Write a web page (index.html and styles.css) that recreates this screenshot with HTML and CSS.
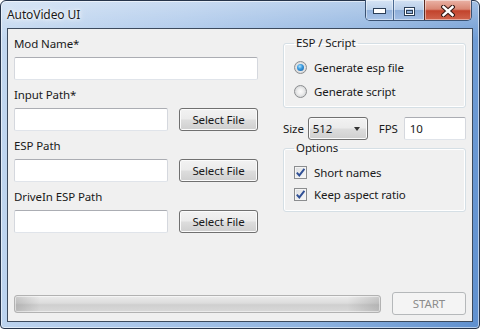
FILE: index.html
```html
<!DOCTYPE html>
<html lang="en">
<head>
    <meta charset="UTF-8">
    <title>AutoVideo UI</title>
    <link rel="stylesheet" href="styles.css">
</head>
<body>
    <div class="window">
        <div class="titlebar">
            <span class="title">AutoVideo UI</span>
            <div class="caption-buttons">
                <span class="cap-btn cap-min">
                    <svg width="13" height="6" viewBox="0 0 13 6"><rect x="0.5" y="0.5" width="12" height="5" fill="#fff" stroke="#2b3e57"/></svg>
                </span>
                <span class="cap-btn cap-max">
                    <svg width="11" height="9" viewBox="0 0 11 9"><rect x="0.5" y="0.5" width="10" height="8" fill="none" stroke="#2b3e57"/><rect x="1.5" y="1.5" width="8" height="6" fill="none" stroke="#fff"/><rect x="2.5" y="3.5" width="6" height="3" fill="none" stroke="#2b3e57"/></svg>
                </span>
                <span class="cap-btn cap-close">
                    <svg width="14" height="12" viewBox="0 0 14 12"><path d="M2.5 2 L11.5 10 M11.5 2 L2.5 10" stroke="#3a1c17" stroke-width="4.6" stroke-linecap="square"/><path d="M2.5 2 L11.5 10 M11.5 2 L2.5 10" stroke="#fff" stroke-width="2.4" stroke-linecap="square"/></svg>
                </span>
            </div>
        </div>

        <div class="client">
            <div class="main">
                <div class="left">
                    <div class="field">
                        <label>Mod Name*</label>
                        <div class="field-row"><div class="textbox full"></div></div>
                    </div>
                    <div class="field">
                        <label>Input Path*</label>
                        <div class="field-row"><div class="textbox"></div><button class="btn">Select File</button></div>
                    </div>
                    <div class="field">
                        <label>ESP Path</label>
                        <div class="field-row"><div class="textbox"></div><button class="btn">Select File</button></div>
                    </div>
                    <div class="field">
                        <label>DriveIn ESP Path</label>
                        <div class="field-row"><div class="textbox"></div><button class="btn">Select File</button></div>
                    </div>
                </div>

                <div class="right">
                    <fieldset class="group group-esp">
                        <legend>ESP / Script</legend>
                        <div class="option-row"><span class="radio checked"></span><span>Generate esp file</span></div>
                        <div class="option-row"><span class="radio"></span><span>Generate script</span></div>
                    </fieldset>

                    <div class="size-row">
                        <span>Size</span>
                        <div class="combo"><span>512</span><span class="arrow"></span></div>
                        <span class="fps-label">FPS</span>
                        <div class="textbox fps">10</div>
                    </div>

                    <fieldset class="group group-options">
                        <legend>Options</legend>
                        <div class="check-row">
                            <span class="checkbox"><svg width="11" height="11" viewBox="0 0 11 11"><path d="M1.8 5.6 L4.3 8.4 L9.4 1.8" fill="none" stroke="#2f4f95" stroke-width="1.9"/></svg></span>
                            <span>Short names</span>
                        </div>
                        <div class="check-row">
                            <span class="checkbox"><svg width="11" height="11" viewBox="0 0 11 11"><path d="M1.8 5.6 L4.3 8.4 L9.4 1.8" fill="none" stroke="#2f4f95" stroke-width="1.9"/></svg></span>
                            <span>Keep aspect ratio</span>
                        </div>
                    </fieldset>
                </div>
            </div>

            <div class="bottom">
                <div class="progress"></div>
                <button class="btn start" disabled>START</button>
            </div>
        </div>
    </div>
</body>
</html>
```

FILE: styles.css
```css
* {
    box-sizing: border-box;
}
html, body {
    margin: 0;
    padding: 0;
}
body {
    width: 480px;
    height: 329px;
    overflow: hidden;
    font-family: "Noto Sans", "Open Sans", sans-serif;
    font-size: 11.5px;
    letter-spacing: -0.1px;
    color: #1a1a1a;
    background: #fff;
}
.window {
    width: 480px;
    height: 329px;
    border: 1px solid #26344a;
    border-radius: 6px 6px 4px 4px;
    padding: 0 6px 6px;
    display: flex;
    flex-direction: column;
    background:
        linear-gradient(180deg, rgba(255, 255, 255, 0.35), rgba(255, 255, 255, 0) 40px),
        linear-gradient(100deg, #c3d8f0 0%, #abc7ea 35%, #8db2df 70%, #5f90cf 100%);
    box-shadow: inset 0 0 0 1px rgba(255, 255, 255, 0.55);
}
.titlebar {
    height: 27px;
    display: flex;
    align-items: flex-start;
    flex-shrink: 0;
}
.title {
    margin-top: 6px;
    line-height: 16px;
    font-size: 12px;
    text-shadow: 0 0 8px #fff, 0 0 4px #fff, 0 0 2px rgba(255, 255, 255, 0.8);
}
.caption-buttons {
    margin-left: auto;
    margin-top: -1px;
    margin-right: 1px;
    display: flex;
    height: 21px;
    border: 1px solid #3a5273;
    border-top: none;
    border-radius: 0 0 5px 5px;
    overflow: hidden;
}
.cap-btn {
    display: flex;
    align-items: center;
    justify-content: center;
    padding-top: 2px;
    height: 100%;
    box-shadow: inset 0 0 0 1px rgba(255, 255, 255, 0.45);
}
.cap-min {
    width: 28px;
    border-right: 1px solid #4a6a93;
    background: linear-gradient(180deg, #d6e4f5 0%, #bdd2eb 48%, #93b2dc 52%, #a9c4e8 100%);
}
.cap-max {
    width: 30px;
    background: linear-gradient(180deg, #d2e1f3 0%, #b8cde8 48%, #8eaed9 52%, #a2bee5 100%);
}
.cap-close {
    width: 47px;
    border-left: 1px solid #5a2a22;
    background: linear-gradient(180deg, #eab3a6 0%, #d98774 46%, #c2432c 54%, #d0644d 100%);
}
.client {
    flex: 1;
    background: #f0f0f0;
    border: 1px solid #3c4a5d;
    display: flex;
    flex-direction: column;
    padding: 0 6px 6px;
}
.main {
    display: grid;
    grid-template-columns: 244px 183px;
    column-gap: 25px;
}
.left {
    padding-top: 7px;
}
.field {
    margin-bottom: 7px;
}
.field label {
    display: block;
    line-height: 16px;
    margin-bottom: 5px;
}
.field-row {
    display: flex;
    gap: 11px;
    height: 23px;
}
.textbox {
    width: 154px;
    height: 23px;
    background: #fff;
    border: 1px solid;
    border-color: #abadb3 #d5d8de #e0e4ea #d5d8de;
    border-radius: 2px;
    line-height: 21px;
    padding: 0 5px;
}
.textbox.full {
    width: 244px;
}
.btn {
    width: 79px;
    height: 23px;
    margin: 0;
    padding: 0;
    font-family: inherit;
    font-size: 11.5px;
    letter-spacing: -0.1px;
    color: #1a1a1a;
    border: 1px solid #707070;
    border-radius: 3px;
    background: linear-gradient(180deg, #f2f2f2 0%, #ebebeb 48%, #dddddd 52%, #cfcfcf 100%);
    box-shadow: inset 0 0 0 1px #fbfbfb;
}
.right {
    padding-top: 6px;
}
.group {
    margin: 0;
    border: 1px solid #d5dfe5;
    border-radius: 3px;
    box-shadow: inset 0 0 0 1px #fff;
    padding: 4px 8px 4px 10px;
    min-width: 0;
}
.group legend {
    padding: 0 2px;
    line-height: 16px;
}
.option-row {
    display: flex;
    align-items: center;
    height: 24px;
}
.radio {
    width: 13px;
    height: 13px;
    border-radius: 50%;
    border: 1px solid #8b8d8f;
    background: radial-gradient(circle, #fcfcfc 0%, #f0f0f0 35%, #cfd1d3 85%);
    display: flex;
    align-items: center;
    justify-content: center;
    margin-right: 7px;
}
.radio.checked::after {
    content: "";
    width: 7px;
    height: 7px;
    border-radius: 50%;
    background: radial-gradient(circle at 40% 35%, #b4e3fb 0%, #3b9ce0 40%, #14589c 100%);
}
.size-row {
    display: flex;
    align-items: center;
    height: 23px;
    margin-top: 9px;
}
.combo {
    width: 60px;
    height: 23px;
    margin-left: 4px;
    border: 1px solid #707070;
    border-radius: 3px;
    background: linear-gradient(180deg, #f2f2f2 0%, #ebebeb 48%, #dddddd 52%, #cfcfcf 100%);
    box-shadow: inset 0 0 0 1px #fbfbfb;
    display: flex;
    align-items: center;
    padding: 0 5px 0 4px;
}
.combo .arrow {
    margin-left: auto;
    width: 0;
    height: 0;
    border-left: 3.5px solid transparent;
    border-right: 3.5px solid transparent;
    border-top: 4px solid #333;
    margin-right: 2px;
}
.fps-label {
    margin-left: 11px;
}
.textbox.fps {
    width: auto;
    flex: 1;
    margin-left: 6px;
}
.group-options {
    margin-top: 0;
    padding: 5px 8px 6px 10px;
}
.check-row {
    display: flex;
    align-items: center;
    height: 22px;
}
.checkbox {
    width: 13px;
    height: 13px;
    border: 1px solid #8b8d8f;
    background: linear-gradient(135deg, #dcdee1, #f8f8f8);
    box-shadow: inset 0 0 0 1px #f4f4f4;
    display: flex;
    align-items: center;
    justify-content: center;
    margin-right: 7px;
}
.bottom {
    margin-top: auto;
    display: flex;
    align-items: center;
    gap: 11px;
}
.progress {
    flex: 1;
    height: 18px;
    border: 1px solid #b2b2b2;
    border-radius: 3px;
    background:
        linear-gradient(90deg, rgba(0, 0, 0, 0.14) 0%, rgba(0, 0, 0, 0) 7%, rgba(0, 0, 0, 0) 91%, rgba(0, 0, 0, 0.14) 100%),
        linear-gradient(180deg, #ececec 0%, #dcdcdc 45%, #cfcfcf 55%, #d9d9d9 100%);
    box-shadow: inset 0 0 0 1px rgba(255, 255, 255, 0.5);
}
.btn.start {
    width: 74px;
    color: #8c8c8c;
    border-color: #b5b8ba;
    background: #f4f4f4;
    box-shadow: none;
}
```
